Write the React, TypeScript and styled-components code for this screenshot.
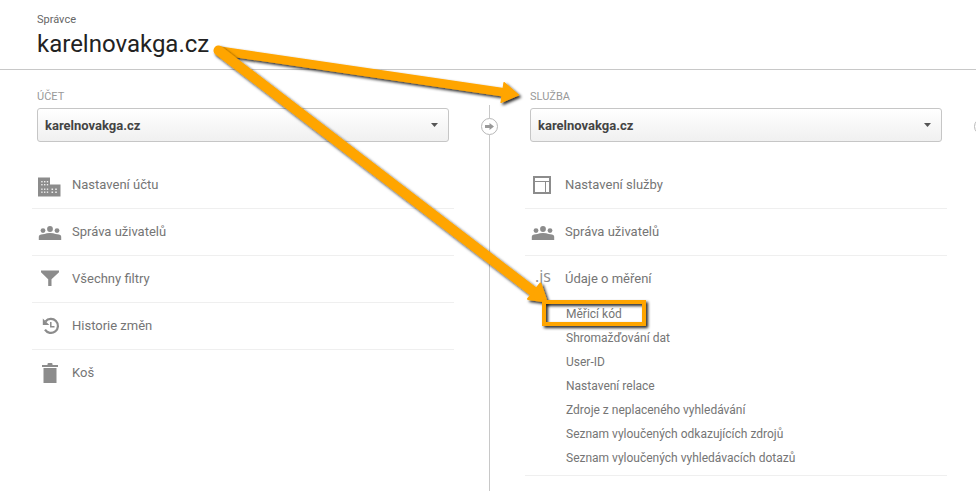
import React from "react";
import styled, { createGlobalStyle } from "styled-components";

const GlobalStyle = createGlobalStyle`
  *, *::before, *::after { box-sizing: border-box; }
  body {
    margin: 0;
    background: #fff;
    font-family: Roboto, "Open Sans", sans-serif;
    overflow: hidden;
  }
`;

const Page = styled.div`
  position: relative;
  display: flex;
  flex-direction: column;
  min-height: 100vh;
  overflow: hidden;
`;

const Header = styled.header`
  display: flex;
  flex-direction: column;
  padding: 12px 37px 9px;
  border-bottom: 1px solid #c8c8c8;
`;

const Eyebrow = styled.span`
  font-size: 11px;
  line-height: 16px;
  color: #666;
`;

const Title = styled.h1`
  margin: 0;
  font-size: 24px;
  font-weight: 400;
  line-height: 32px;
  color: #222;
`;

const Columns = styled.main`
  flex: 1;
  display: grid;
  grid-template-columns: 1fr 71px 1fr 29px;
  padding-left: 32px;
`;

const Column = styled.section`
  display: flex;
  flex-direction: column;
  min-width: 0;
  padding-top: 19px;
`;

const Picker = styled.div`
  display: flex;
  flex-direction: column;
  padding: 0 5px;
  margin-bottom: 20px;
`;

const PickerLabel = styled.label`
  font-size: 11px;
  line-height: 16px;
  margin-bottom: 3px;
  color: #999;
`;

const SelectBox = styled.div`
  position: relative;
  display: flex;

  svg {
    position: absolute;
    right: 11px;
    top: 15px;
    pointer-events: none;
  }
`;

const Select = styled.select`
  appearance: none;
  width: 100%;
  height: 34px;
  padding: 1px 28px 0 7px;
  border: 1px solid #c6c6c6;
  border-radius: 3px;
  background: linear-gradient(#fff, #f0f0f0);
  font: 700 13px/16px Roboto, sans-serif;
  color: #444;
`;

const Menu = styled.ul`
  list-style: none;
  margin: 0;
  padding: 0;
`;

const MenuItem = styled.li<{ $last?: boolean }>`
  border-bottom: 1px solid ${(p) => (p.$last ? "transparent" : "#efefef")};
`;

const MenuLink = styled.a`
  display: flex;
  align-items: center;
  gap: 10px;
  height: 46px;
  padding-left: 6px;
  font-size: 13px;
  line-height: 16px;
  color: #757575;
  text-decoration: none;
`;

const IconSlot = styled.span`
  display: flex;
  align-items: center;
  justify-content: center;
  flex: none;
  width: 24px;
  height: 24px;
  color: #8c8c8c;
`;

const ScriptMark = styled.span`
  padding-bottom: 6px;
  font: 400 16px/16px "Open Sans", sans-serif;
  color: #8c8c8c;
`;

const SubMenu = styled.ul`
  list-style: none;
  margin: 0;
  padding: 0 0 5px 41px;
`;

const SubLink = styled.a`
  display: block;
  font-size: 12px;
  line-height: 24px;
  color: #757575;
  text-decoration: none;
`;

const Divider = styled.div`
  display: flex;
  flex-direction: column;
  align-items: center;
  width: 71px;
  padding-top: 35px;
`;

const Line = styled.span<{ $grow?: boolean }>`
  width: 1px;
  height: 13px;
  flex: ${(p) => (p.$grow ? "1" : "none")};
  background: #c8c8c8;
`;

const MoveButton = styled.button`
  display: flex;
  align-items: center;
  justify-content: center;
  flex: none;
  width: 17px;
  height: 17px;
  padding: 0;
  border: 1px solid #b8b8b8;
  border-radius: 50%;
  background: #fff;
`;

const Annotations = styled.svg`
  position: absolute;
  left: 0;
  top: 0;
  overflow: visible;
  pointer-events: none;
`;

const icons: Record<string, React.ReactNode> = {
  building: (
    <svg width="24" height="24" viewBox="0 0 24 24" aria-hidden="true">
      <path fill="currentColor" d="M0 4.500h12v7h10.500v12H0z" />
      <g fill="#fff" fillOpacity="0.85">
        {[8, 11, 15.5, 18.5].map((y) =>
          [3.2, 6, 8.8].map((x) => <rect key={`${x}-${y}`} x={x} y={y} width="1.4" height="1.4" />)
        )}
        {[15.5, 18.5].map((y) =>
          [13.5, 17.2].map((x) => <rect key={`${x}-${y}`} x={x} y={y} width="1.6" height="1.5" />)
        )}
      </g>
    </svg>
  ),
  users: (
    <svg width="24" height="24" viewBox="0 0 24 24" fill="currentColor" aria-hidden="true">
      <circle cx="5" cy="10.600" r="2.400" />
      <circle cx="12" cy="9" r="2.900" />
      <circle cx="19" cy="10.600" r="2.400" />
      <path d="M.8 20v-3.500Q.8 14.800 3 14.500L6.500 14Q8.500 13 12 13t5.500 1l3.500.5q2.200.3 2.200 2V20z" />
    </svg>
  ),
  filter: (
    <svg width="24" height="24" viewBox="0 0 24 24" fill="currentColor" aria-hidden="true">
      <path d="M3 3.500h18v1.800l-7.500 7V19H10.200v-6.700L3 5.300z" />
    </svg>
  ),
  history: (
    <svg width="24" height="24" viewBox="0 0 24 24" fill="none" stroke="currentColor" aria-hidden="true">
      <path d="M7.500 7.500A7 7 0 1 1 7 15.600" strokeWidth="2.200" />
      <path d="M12.800 8v4.800h3.700" strokeWidth="1.500" />
      <path d="M4.800 4.500v6.500h6.500z" fill="currentColor" stroke="none" />
    </svg>
  ),
  trash: (
    <svg width="24" height="24" viewBox="0 0 24 24" fill="currentColor" aria-hidden="true">
      <path d="M4 4h5.500V3q0-1 1-1h3q1 0 1 1v1H20v2H4zM5.500 7h13v15h-13z" />
    </svg>
  ),
  layout: (
    <svg width="24" height="24" viewBox="0 0 24 24" fill="none" stroke="currentColor" aria-hidden="true">
      <path d="M3 4h16v16H3z" strokeWidth="2" />
      <path d="M4 8.500h14M14.500 8.500V19" strokeWidth="1" />
    </svg>
  ),
  script: <ScriptMark>.js</ScriptMark>,
};

interface Entry {
  icon: string;
  label: string;
  children?: string[];
}

const accountEntries: Entry[] = [
  { icon: "building", label: "Nastavení účtu" },
  { icon: "users", label: "Správa uživatelů" },
  { icon: "filter", label: "Všechny filtry" },
  { icon: "history", label: "Historie změn" },
  { icon: "trash", label: "Koš" },
];

const serviceEntries: Entry[] = [
  { icon: "layout", label: "Nastavení služby" },
  { icon: "users", label: "Správa uživatelů" },
  {
    icon: "script",
    label: "Údaje o měření",
    children: [
      "Měřicí kód",
      "Shromažďování dat",
      "User-ID",
      "Nastavení relace",
      "Zdroje z neplaceného vyhledávání",
      "Seznam vyloučených odkazujících zdrojů",
      "Seznam vyloučených vyhledávacích dotazů",
    ],
  },
];

function AdminColumn({ id, label, entries, openEnd }: {
  id: string;
  label: string;
  entries: Entry[];
  openEnd?: boolean;
}) {
  return (
    <Column>
      <Picker>
        <PickerLabel htmlFor={id}>{label}</PickerLabel>
        <SelectBox>
          <Select id={id}>
            <option>karelnovakga.cz</option>
          </Select>
          <svg width="7" height="4" viewBox="0 0 7 4" aria-hidden="true">
            <path d="M0 0h7L3.500 4z" fill="#555" />
          </svg>
        </SelectBox>
      </Picker>
      <Menu>
        {entries.map((entry, i) => (
          <MenuItem key={entry.label} $last={openEnd && i === entries.length - 1}>
            <MenuLink href="#">
              <IconSlot>{icons[entry.icon]}</IconSlot>
              {entry.label}
            </MenuLink>
            {entry.children && (
              <SubMenu>
                {entry.children.map((child) => (
                  <li key={child}>
                    <SubLink href="#">{child}</SubLink>
                  </li>
                ))}
              </SubMenu>
            )}
          </MenuItem>
        ))}
      </Menu>
    </Column>
  );
}

function ColumnDivider() {
  return (
    <Divider>
      <Line />
      <MoveButton aria-label="Přesunout">
        <svg width="9" height="7" viewBox="0 0 9 7" aria-hidden="true">
          <path d="M0 2h4.500V0L9 3.500 4.500 7V5H0z" fill="#999" />
        </svg>
      </MoveButton>
      <Line $grow />
    </Divider>
  );
}

export default function App() {
  return (
    <Page>
      <GlobalStyle />
      <Header>
        <Eyebrow>Správce</Eyebrow>
        <Title>karelnovakga.cz</Title>
      </Header>
      <Columns>
        <AdminColumn id="account" label="ÚČET" entries={accountEntries} openEnd />
        <ColumnDivider />
        <AdminColumn id="service" label="SLUŽBA" entries={serviceEntries} />
        <ColumnDivider />
      </Columns>
      <Annotations width="976" height="491" viewBox="0 0 976 491" aria-hidden="true">
        <defs>
          <filter id="shadow" x="-10%" y="-20%" width="120%" height="150%">
            <feDropShadow dx="2" dy="2" stdDeviation="1.500" floodColor="#000" floodOpacity="0.85" />
          </filter>
        </defs>
        <g filter="url(#shadow)">
          <path d="M218.500 50.500L505 92.500" stroke="#ffa500" strokeWidth="8.500" strokeLinecap="round" />
          <path d="M504 82.500L518.500 95L501 102.500Z" fill="#ffa500" stroke="#ffa500" strokeWidth="1.200" strokeLinejoin="round" />
        </g>
        <g filter="url(#shadow)">
          <path d="M218.500 50.500L534 292" stroke="#ffa500" strokeWidth="10" strokeLinecap="round" />
          <path d="M540.500 283.500L546.500 301.500L528 299Z" fill="#ffa500" stroke="#ffa500" strokeWidth="2" strokeLinejoin="round" />
        </g>
        <rect x="544" y="302" width="100" height="22" fill="none" stroke="#ffa500" strokeWidth="4" filter="url(#shadow)" />
      </Annotations>
    </Page>
  );
}
